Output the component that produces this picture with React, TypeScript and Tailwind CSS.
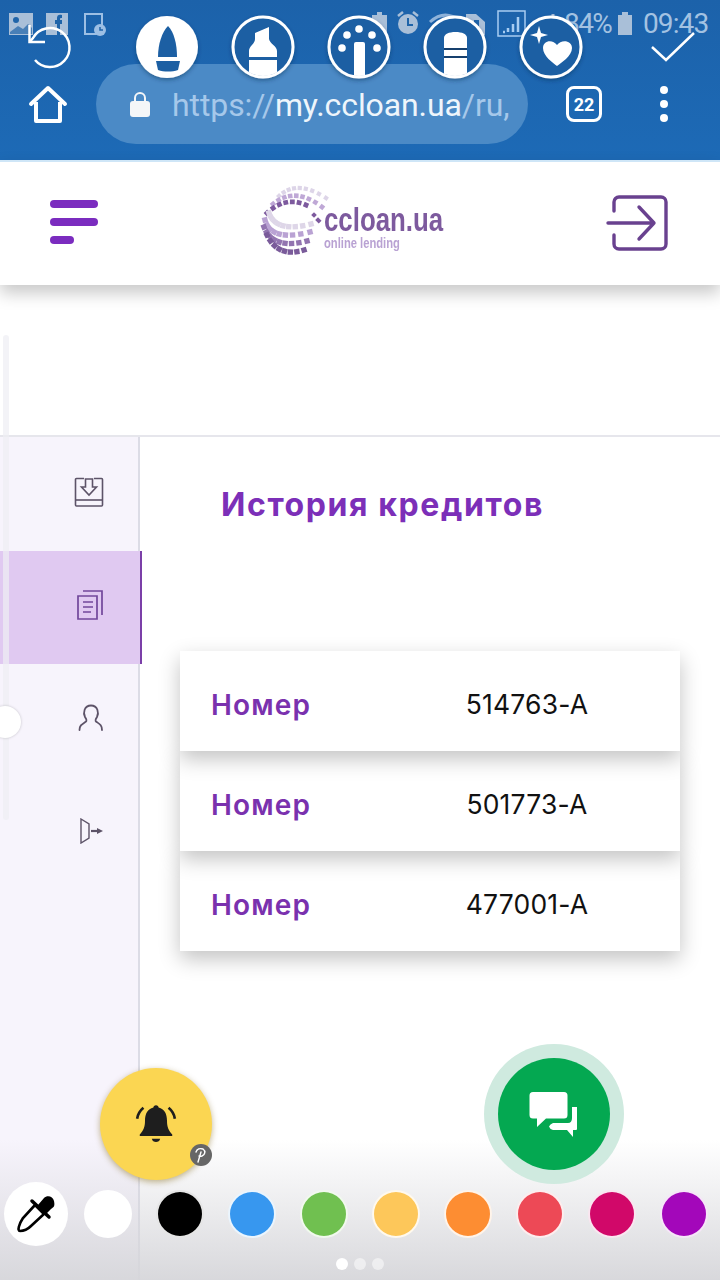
import React from "react";

const bands: [number, number, number, number, number, number, string, number, number][] = [
  [279, 196, 297, 179, 326, 198, "#ddd5e8", 4.200, 9],
  [273, 204, 295, 186, 322, 207, "#bfa8d6", 4.600, 9],
  [267, 213, 285, 196, 306, 205, "#7d5a9e", 4.800, 7],
  [269, 213, 276, 233, 311, 224, "#ded6e8", 5.400, 9],
  [265, 220, 271, 242, 310, 232, "#b9a2d3", 5.400, 9],
  [264, 227, 273, 250, 307, 241, "#9274b0", 5.400, 9],
  [267, 235, 278, 258, 304, 250, "#7a5b9a", 5.400, 8],
];

function Logo() {
  const squares: React.ReactElement[] = [];
  bands.forEach((b, i) => {
    const n = b[8];
    for (let k = 0; k < n; k++) {
      const t = k / (n - 1);
      const x = (1 - t) * (1 - t) * b[0] + 2 * t * (1 - t) * b[2] + t * t * b[4];
      const y = (1 - t) * (1 - t) * b[1] + 2 * t * (1 - t) * b[3] + t * t * b[5];
      const dx = 2 * (1 - t) * (b[2] - b[0]) + 2 * t * (b[4] - b[2]);
      const dy = 2 * (1 - t) * (b[3] - b[1]) + 2 * t * (b[5] - b[3]);
      const a = (Math.atan2(dy, dx) * 180) / Math.PI;
      squares.push(
        <rect key={`${i}-${k}`} x={x - b[7] / 2} y={y - b[7] / 2} width={b[7]} height={b[7]} fill={b[6]} transform={`rotate(${a} ${x} ${y})`} />
      );
    }
  });
  return (
    <svg className="absolute left-0 top-0" width="70" height="80" viewBox="260 180 70 80">
      {squares}
      <rect x="312" y="213" width="4" height="4" fill="#7d5a9e" transform="rotate(45 314 215)" />
      <rect x="316" y="218" width="5" height="4" fill="#7d5a9e" transform="rotate(45 318 220)" />
    </svg>
  );
}

function Status() {
  return (
    <div className="absolute left-0 top-0 w-[720px] h-[48px]">
      <svg className="absolute left-0 top-0" width="720" height="48" viewBox="0 0 720 48">
        <rect x="9" y="13" width="24" height="22" fill="#a9bfd8" />
        <circle cx="16" cy="20" r="3" fill="#1f64a9" />
        <path d="M10 32l8-6 5 3 5-5 4 4v6H10z" fill="#1f64a9" opacity="0.7" />
        <rect x="46" y="13" width="22" height="22" fill="#a9bfd8" />
        <path d="M57 35V24h-2v-4h2v-2c0-3 2-4 5-3v3c-2 0-2 0-2 2h2v4h-2v11z" fill="#1f64a9" />
        <path d="M96 34H85V14h17v16" fill="none" stroke="#9dbfe4" strokeWidth="2" />
        <circle cx="100" cy="30" r="6" fill="#9dbfe4" />
        <path d="M100 27v3h3" stroke="#1f64a9" strokeWidth="1.5" fill="none" />
        <path d="M372 35V15h5v-3h5v3h5v20z" fill="#a9bfd8" />
        <circle cx="408" cy="24" r="10" fill="#a9bfd8" />
        <path d="M408 18v7h5" stroke="#1f64a9" strokeWidth="2" fill="none" />
        <path d="M398 16l5-4M418 16l-5-4" stroke="#a9bfd8" strokeWidth="2.5" />
        <path d="M430 22c10-9 20-9 30-1M436 27c6-5 12-5 18 0" stroke="#8fb3da" strokeWidth="3" fill="none" />
        <path d="M466 14h10l9 8v13h-19z" fill="#a9bfd8" />
        <rect x="474" y="20" width="5" height="6" fill="#1f64a9" />
        <rect x="498" y="11" width="27" height="25" fill="none" stroke="#a8cdf2" strokeWidth="1.5" />
        <path d="M503 32h2M508 32v-4M513 32v-8M518 32V17" stroke="#a8cdf2" strokeWidth="2.5" />
        <path d="M537 30v5M545 24v11M553 14v21" stroke="#a9bfd8" strokeWidth="3" />
        <path d="M618 15h4v-3h6v3h4v20h-14z" fill="#a9bfd8" />
      </svg>
      <div className="absolute left-[564px] top-[6px] text-[28px] leading-[36px] tracking-[-1.6px] text-[#a3c2e2] font-['Roboto',sans-serif]">84%</div>
      <div className="absolute left-[643px] top-[6px] text-[28px] leading-[36px] tracking-[-0.9px] text-[#a3c2e2] font-['Roboto',sans-serif]">09:43</div>
    </div>
  );
}

function Tools() {
  return (
    <svg className="absolute left-0 top-0" width="720" height="100" viewBox="0 0 720 100">
      <defs>
        <filter id="s" x="-20%" y="-20%" width="140%" height="150%">
          <feDropShadow dx="0" dy="2" stdDeviation="2" floodColor="#0a2a50" floodOpacity="0.45" />
        </filter>
        <clipPath id="c2"><circle cx="263" cy="47" r="29" /></clipPath>
        <clipPath id="c3"><circle cx="359" cy="47" r="29" /></clipPath>
        <clipPath id="c4"><circle cx="455" cy="47" r="29" /></clipPath>
      </defs>
      {/* undo */}
      <path d="M30 41.500 L33 38 A19.500 19.500 0 1 1 35 60" fill="none" stroke="#fff" strokeWidth="2.5" />
      <path d="M29.500 25V42H45" fill="none" stroke="#fff" strokeWidth="2.5" />
      {/* pen 1 */}
      <g filter="url(#s)">
        <circle cx="167" cy="47" r="31" fill="#fff" />
        <path d="M168 26c6 6 9 18 9 31h-19c0-13 4-25 10-31z" fill="#1c5fa3" />
        <path d="M156 61h24l-2 9c-6 2-14 2-20 0z" fill="#1c5fa3" />
      </g>
      {/* pen 2 */}
      <g filter="url(#s)">
        <circle cx="263" cy="47" r="30" fill="#1c5fa3" stroke="#fff" strokeWidth="3" />
        <g clipPath="url(#c2)">
          <path d="M255 33L269 27V39C270 44 277 46 277 51V57H249V51C249 46 255 44 255 39Z" fill="#fff" />
          <rect x="249" y="60" width="28" height="20" fill="#fff" />
        </g>
      </g>
      {/* pen 3 */}
      <g filter="url(#s)">
        <circle cx="359" cy="47" r="30" fill="#1c5fa3" stroke="#fff" strokeWidth="3" />
        <circle cx="347" cy="35" r="3.800" fill="#fff" />
        <circle cx="372" cy="35" r="3.800" fill="#fff" />
        <circle cx="342" cy="48" r="3.800" fill="#fff" />
        <circle cx="377" cy="48" r="3.800" fill="#fff" />
        <circle cx="359" cy="29" r="3.800" fill="#fff" />
        <g clipPath="url(#c3)">
          <rect x="354" y="42" width="11" height="36" rx="2" fill="#fff" />
        </g>
      </g>
      {/* pen 4 */}
      <g filter="url(#s)">
        <circle cx="455" cy="47" r="30" fill="#1c5fa3" stroke="#fff" strokeWidth="3" />
        <g clipPath="url(#c4)">
          <path d="M444 38c0-4 5-6 11.500-6s11.500 2 11.500 6v40h-23z" fill="#fff" />
        </g>
        <path d="M444 49h23M444 57h23" stroke="#153f6e" strokeWidth="2" />
      </g>
      {/* pen 5 */}
      <g filter="url(#s)">
        <circle cx="551" cy="47" r="30" fill="#1c5fa3" stroke="#fff" strokeWidth="3" />
        <path d="M557 66c-4-3-14-10-14-18 0-8 10-9 14-3 4-6 15-5 15 3 0 8-11 15-15 18z" fill="#fff" />
        <path d="M539 26l2 7 7 2-7 2-2 7-2-7-7-2 7-2z" fill="#fff" />
      </g>
      {/* check */}
      <path d="M652 47l14 13 28-27" fill="none" stroke="#fff" strokeWidth="2.5" />
    </svg>
  );
}

function Sidebar() {
  const Cell = ({ active, children }: { active?: boolean; children: React.ReactNode }) => (
    <div className={`h-[113px] flex items-center justify-end pb-[5px] ${active ? "bg-[#e0c9f1] w-[142px] border-r-2 border-[#7b3fa8] pr-[37px]" : "w-[138px] pr-[34px]"}`}>
      {children}
    </div>
  );
  return (
    <div className="w-[140px] h-full bg-[#f7f4fc] border-r-2 border-[#dcdce6] shrink-0 pt-[1px]">
      <Cell>
        <svg width="30" height="30" viewBox="0 0 30 30" fill="none" stroke="#5d5368" strokeWidth="1.6">
          <path d="M10 1.500H2.500a1 1 0 0 0-1 1V28a1 1 0 0 0 1 1h25a1 1 0 0 0 1-1V2.500a1 1 0 0 0-1-1H20" />
          <path d="M1.500 23h27" />
          <path d="M11.500 2h7v8h4L15 18 7.500 10h4z" />
        </svg>
      </Cell>
      <Cell active>
        <svg width="26" height="30" viewBox="0 0 26 30" fill="none" stroke="#71479b" strokeWidth="1.7">
          <path d="M1 6h19v23H1z" />
          <path d="M6 1h19v24" />
          <path d="M6 12h10M6 17h10M6 22h8" />
        </svg>
      </Cell>
      <Cell>
        <svg width="26" height="28" viewBox="0 0 26 28" fill="none" stroke="#5d5368" strokeWidth="1.8">
          <path d="M1.500 26c0-5 3-6 6.500-8.500 1-1 0-3-1-4.500-2-4-1-11.500 6-11.500s8 7.500 6 11.500c-1 1.500-2 3.500-1 4.500 3.500 2.500 6 3.500 6 8.500" strokeLinecap="round" />
        </svg>
      </Cell>
      <Cell>
        <svg width="24" height="26" viewBox="0 0 24 26" fill="none" stroke="#5d5368" strokeWidth="1.4">
          <path d="M1 1l8 5v14l-8 5z" />
          <path d="M11 13h8" strokeWidth="2.2" />
          <path d="M17 10l6 3-6 3z" fill="#5d5368" stroke="none" />
        </svg>
      </Cell>
    </div>
  );
}

function Row({ value, cls }: { value: string; cls: string }) {
  return (
    <div className={`relative h-[100px] bg-white flex items-center shadow-[0_8px_20px_rgba(0,0,0,0.24)] pl-[31px] pt-[7px] ${cls}`}>
      <span className="w-[251px] text-[28px] font-semibold text-[#7a31ae] font-['Inter',sans-serif] tracking-[1.2px]">Номер</span>
      <span className="w-[130px] text-center text-[26.5px] text-[#111] font-['Inter',sans-serif] tracking-[0.2px]">{value}</span>
    </div>
  );
}

const palette = ["#ffffff", "#000000", "#3797ef", "#70c050", "#fdc75a", "#fd8d32", "#ed4956", "#d10869", "#a307ba"];

function Palette() {
  return (
    <div className="absolute left-0 bottom-0 w-[720px] h-[140px] pointer-events-none bg-gradient-to-b from-[rgba(214,214,218,0)] to-[rgba(214,214,218,0.95)]">
      <div className="absolute left-[4px] top-[42px] flex items-center h-[64px]">
        <div className="w-[64px] h-[64px] rounded-full bg-white flex items-center justify-center mr-[16px]">
          <svg width="40" height="40" viewBox="0 0 40 40">
            <path d="M4 37c-3 0-1-7 3-13L19 11l9 9-13 12c-3 3-7 5-11 5z" fill="#fff" stroke="#000" strokeWidth="2.600" />
            <path d="M16 7l17 16" stroke="#000" strokeWidth="3.500" strokeLinecap="round" />
            <path d="M22 11l6-7c3-3 9-2 10 3s0 6-3 8l-6 6z" fill="#000" />
          </svg>
        </div>
        {palette.map((c, i) => (
          <div key={c} className={i === 0 ? "w-[48px] h-[48px] rounded-full mr-[24px]" : "w-[48px] h-[48px] rounded-full border-2 border-white/90 mr-[24px]"} style={{ backgroundColor: c }} />
        ))}
      </div>
      <div className="absolute left-[336px] bottom-[10px] flex gap-[6px]">
        <div className="w-[12px] h-[12px] rounded-full bg-white" />
        <div className="w-[12px] h-[12px] rounded-full bg-white/50" />
        <div className="w-[12px] h-[12px] rounded-full bg-white/50" />
      </div>
    </div>
  );
}

export default function App() {
  return (
    <div className="relative w-[720px] h-[1280px] overflow-hidden bg-white flex flex-col font-['Roboto',sans-serif]">
      {/* browser bar */}
      <div className="h-[160px] shrink-0 bg-gradient-to-b from-[#1c62aa] to-[#1d6ab6] flex items-end pb-[16px] pl-[28px]">
        <svg width="40" height="40" viewBox="0 0 40 40" fill="none" stroke="#fff" strokeWidth="4" strokeLinejoin="round" className="mb-[19px] shrink-0">
          <path d="M3 19L20 3l17 16" strokeLinecap="round" />
          <path d="M8 17v19h24V17" />
        </svg>
        <div className="ml-[28px] w-[432px] h-[80px] rounded-[40px] bg-[#4b8ac6] flex items-center pl-[34px] shrink-0">
          <svg width="20" height="26" viewBox="0 0 20 26" className="shrink-0">
            <path d="M5 11V7a5 5 0 0 1 10 0v4" fill="none" stroke="#f4f6f8" strokeWidth="2" />
            <rect x="0" y="10" width="20" height="16" rx="3" fill="#f4f6f8" />
          </svg>
          <div className="ml-[22px] whitespace-nowrap text-[32px] leading-[40px] pt-[2px] tracking-[-0.1px]">
            <span className="text-[#a6c8ea]">https://</span>
            <span className="text-[#eef5fb]">my.ccloan.ua</span>
            <span className="text-[#a6c8ea]">/ru,</span>
          </div>
        </div>
        <div className="ml-[38px] mb-[22px] w-[36px] h-[36px] rounded-[8px] border-[3.5px] border-white flex items-center justify-center text-white text-[18px] font-bold shrink-0">22</div>
        <div className="ml-[58px] mb-[22px] h-[36px] flex flex-col justify-between shrink-0">
          <div className="w-[8px] h-[8px] rounded-full bg-white" />
          <div className="w-[8px] h-[8px] rounded-full bg-white" />
          <div className="w-[8px] h-[8px] rounded-full bg-white" />
        </div>
      </div>

      {/* site header */}
      <div className="relative z-10 h-[125px] shrink-0 bg-white border-t-2 border-[#cfe6f7] shadow-[0_8px_16px_rgba(0,0,0,0.22)] flex items-center justify-between pl-[50px] pr-[52px]">
        <div className="flex flex-col gap-[10px] -mt-[4px]">
          <div className="w-[48px] h-[8px] rounded-full bg-[#7b2cbf]" />
          <div className="w-[48px] h-[8px] rounded-full bg-[#7b2cbf]" />
          <div className="w-[24px] h-[8px] rounded-full bg-[#7b2cbf]" />
        </div>
        <svg width="62" height="56" viewBox="0 0 62 56" fill="none" stroke="#69418f" strokeWidth="3.400" strokeLinecap="round" strokeLinejoin="round" className="-mt-[1px]">
          <path d="M8 16V7a5 5 0 0 1 5-5h42a5 5 0 0 1 5 5v42a5 5 0 0 1-5 5H13a5 5 0 0 1-5-5v-9" />
          <path d="M2 28h46M33 12l15 16-15 16" />
        </svg>
      </div>

      {/* logo over header */}
      <div className="absolute left-[260px] top-[180px] w-[190px] h-[80px] z-20">
        <Logo />
        <div className="absolute left-[64px] top-[24px] text-[34px] leading-[30px] font-bold text-[#7d5a9e] font-['Liberation_Sans',sans-serif] origin-left scale-x-[0.76] whitespace-nowrap">ccloan.ua</div>
        <div className="absolute left-[64px] top-[54px] text-[14px] leading-[18px] font-bold text-[#b9a2d3] font-['Liberation_Sans',sans-serif] origin-left scale-x-[0.8] whitespace-nowrap">online lending</div>
      </div>

      <div className="h-[152px] shrink-0 border-b-2 border-[#e6e6ec]" />

      <div className="flex-1 flex min-h-0">
        <Sidebar />
        <div className="flex-1 min-w-0 pl-[40px] pr-[40px]">
          <h1 className="ml-[41px] mt-[48px] text-[32px] leading-[40px] font-bold text-[#7c2fb8] font-['Inter',sans-serif] tracking-[1.6px] whitespace-nowrap">История кредитов</h1>
          <div className="mt-[126px] flex flex-col">
            <Row value="514763-A" cls="z-30" />
            <Row value="501773-A" cls="z-20" />
            <Row value="477001-A" cls="z-10" />
          </div>
        </div>
      </div>

      {/* browser-side scroll track and knob */}
      <div className="absolute left-[3px] top-[335px] w-[6px] h-[485px] rounded-full bg-[#eeeef3]/70" />
      <div className="absolute -left-[11px] top-[706px] w-[32px] h-[32px] rounded-full bg-white shadow-[0_0_3px_rgba(0,0,0,0.2)]" />

      <Palette />

      {/* yellow bell FAB */}
      <div className="absolute left-[100px] top-[1068px] w-[112px] h-[112px] rounded-full bg-[#fbd652] shadow-[0_2px_6px_rgba(120,90,0,0.45)] flex items-center justify-center">
        <svg width="44" height="44" viewBox="0 0 42 42" fill="#1e1e1e">
          <path d="M21 3c-1.500 0-2.500 1-2.500 2.200C13 6.500 10.500 11 10.500 18c0 6-1.500 9.500-5 13v1.500h31V31c-3.500-3.500-5-7-5-13 0-7-2.500-11.500-8-12.800C23.500 4 22.500 3 21 3z" />
          <path d="M17 35h8c-.5 2-2 3.200-4 3.200S17.500 37 17 35z" />
          <path d="M3 16c.5-4 3-8 6-10.500M39 16c-.5-4-3-8-6-10.500" fill="none" stroke="#1e1e1e" strokeWidth="2.500" />
        </svg>
        <div className="absolute left-[90px] top-[76px] w-[22px] h-[22px] rounded-full bg-[#666] flex items-center justify-center">
          <svg width="14" height="16" viewBox="0 0 14 16" fill="none" stroke="#fff" strokeWidth="1.400" strokeLinecap="round">
            <path d="M2 5c1-3 4-4 7-3 3 2 2 6-1 7-2 .5-3 0-3 0M7 5L4 15" />
          </svg>
        </div>
      </div>

      {/* green chat FAB */}
      <div className="absolute left-[498px] top-[1058px] w-[112px] h-[112px] rounded-full bg-[#04a851] shadow-[0_0_0_14px_#cfeadf] flex items-center justify-center">
        <svg width="50" height="48" viewBox="0 0 50 48" fill="#fff" className="mt-[2px]">
          <path d="M4 1h31a3.500 3.500 0 0 1 3.500 3.500V24a3.500 3.500 0 0 1-3.500 3.500H17l-9 8.500v-8.500H4A3.500 3.500 0 0 1 .5 24V4.500A3.500 3.500 0 0 1 4 1z" />
          <path d="M43 16V27Q43 32 39 32H24Q21 33 20 35.500Q21 38.500 24 39H38L44 46V39H47Q48 39 48 38V16Z" />
        </svg>
      </div>

      <Status />
      <Tools />
    </div>
  );
}
